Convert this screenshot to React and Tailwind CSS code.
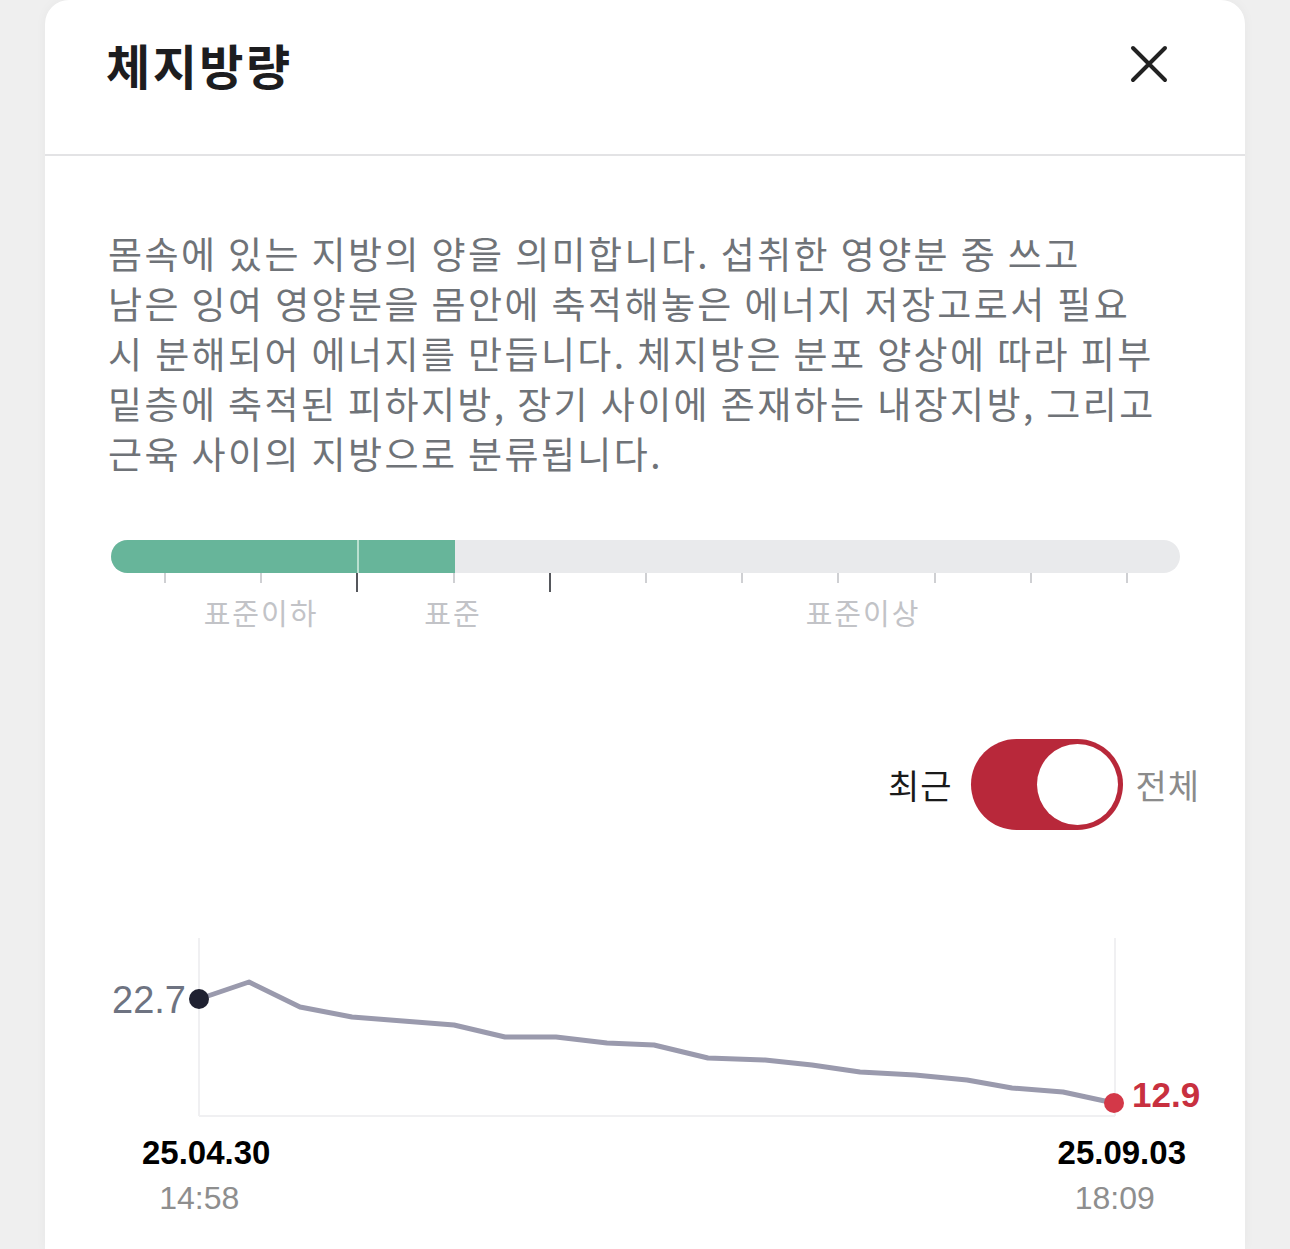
import React from "react";

const KR = { fontFamily: '"Noto Sans CJK KR", "Noto Sans", sans-serif' };

const ticks = Array.from({ length: 11 }, (_, i) => ({
  left: 53 + i * 96.2,
  major: i === 2 || i === 4,
}));

const points = [
  [199, 998], [249, 981], [300, 1006], [352, 1016], [403, 1020], [454, 1024],
  [505, 1036], [556, 1036], [607, 1042], [654, 1044], [708, 1057], [765, 1059],
  [812, 1064], [860, 1071], [915, 1074], [967, 1079], [1012, 1087], [1063, 1091],
  [1114, 1102],
];

const LevelBar = () => (
  <div className="ml-[66px] w-[1069px]">
    <div className="relative h-[33px] rounded-full bg-[#e9eaec] overflow-hidden">
      <div className="absolute left-0 top-0 h-full w-[344px] bg-[#67b59a]" />
      <div className="absolute left-[246px] top-0 h-full w-[2px] bg-[#b9e0d0]" />
    </div>
    <div className="relative h-[60px]">
      {ticks.map((t, i) => (
        <div
          key={i}
          className={t.major ? "absolute top-0 w-[2px] h-[19px] bg-[#55575c]" : "absolute top-0 w-[2px] h-[10px] bg-[#cfd0d3]"}
          style={{ left: t.left }}
        />
      ))}
      <span className="absolute top-[21px] left-[150px] -translate-x-1/2 text-[29px] leading-[36px] tracking-[2px] text-[#c2c3c7]" style={KR}>표준이하</span>
      <span className="absolute top-[21px] left-[342px] -translate-x-1/2 text-[29px] leading-[36px] tracking-[2px] text-[#c2c3c7]" style={KR}>표준</span>
      <span className="absolute top-[21px] left-[752px] -translate-x-1/2 text-[29px] leading-[36px] tracking-[2px] text-[#c2c3c7]" style={KR}>표준이상</span>
    </div>
  </div>
);

const Chart = () => (
  <svg viewBox="45 925 1200 200" width="1200" height="200" className="block">
    <line x1="199" y1="937" x2="199" y2="1115" stroke="#f0f0f2" strokeWidth="2" />
    <line x1="1115" y1="937" x2="1115" y2="1115" stroke="#f0f0f2" strokeWidth="2" />
    <line x1="199" y1="1115" x2="1115" y2="1115" stroke="#f0f0f2" strokeWidth="2" />
    <polyline
      points={points.map((p) => p.join(",")).join(" ")}
      fill="none"
      stroke="#9a9aad"
      strokeWidth="5"
      strokeLinejoin="round"
      strokeLinecap="round"
    />
    <circle cx="199" cy="998" r="10" fill="#1f2131" />
    <circle cx="1114" cy="1102" r="10" fill="#d33848" />
    <text x="186" y="1012" textAnchor="end" fontFamily="Liberation Sans, Arial, sans-serif" fontSize="38" fill="#6e7381">22.7</text>
    <text x="1132" y="1106" fontFamily="Liberation Sans, Arial, sans-serif" fontSize="35" fontWeight="700" fill="#c8303f">12.9</text>
  </svg>
);

export default function App() {
  return (
    <div className="min-h-[1249px] bg-[#efefef] px-[45px]">
      <div className="bg-white rounded-t-[24px] min-h-[1249px] shadow-[0_0_12px_rgba(0,0,0,0.04)]">
        <div className="h-[156px] border-b-2 border-[#e3e3e5] flex items-start justify-between pl-[61px] pr-[76px] pt-[32px]">
          <h1 className="text-[48px] leading-[64px] font-bold tracking-[2.5px] text-[#1d1d1f]" style={KR}>체지방량</h1>
          <button className="mt-[12px]">
            <svg width="40" height="40" viewBox="0 0 40 40">
              <path d="M4 4 L36 36 M36 4 L4 36" stroke="#222" strokeWidth="4" strokeLinecap="round" />
            </svg>
          </button>
        </div>

        <div className="pt-[72px] px-[63px]">
          <p className="text-[37px] leading-[50px] text-[#6f7378] tracking-[2.4px]" style={KR}>
            몸속에 있는 지방의 양을 의미합니다. 섭취한 영양분 중 쓰고<br />
            남은 잉여 영양분을 몸안에 축적해놓은 에너지 저장고로서 필요<br />
            시 분해되어 에너지를 만듭니다. 체지방은 분포 양상에 따라 피부<br />
            밑층에 축적된 피하지방, 장기 사이에 존재하는 내장지방, 그리고<br />
            근육 사이의 지방으로 분류됩니다.
          </p>
        </div>

        <div className="mt-[62px]">
          <LevelBar />
        </div>

        <div className="mt-[106px] flex items-center justify-end gap-[20px] pr-[45px]">
          <span className="text-[34px] tracking-[1px] text-[#1a1a1a] -mr-[1px]" style={KR}>최근</span>
          <div className="relative w-[152px] h-[91px] rounded-full bg-[#b8283a]">
            <div className="absolute right-[5px] top-[5px] w-[81px] h-[81px] rounded-full bg-white" />
          </div>
          <span className="text-[34px] tracking-[1px] text-[#8b8b8b] -ml-[8px]" style={KR}>전체</span>
        </div>

        <div className="mt-[96px]">
          <Chart />
        </div>

        <div className="mt-[7px] flex justify-between pl-[97px] pr-[59px]" style={{ fontFamily: '"Liberation Sans", Arial, sans-serif' }}>
          <div className="flex flex-col items-center">
            <span className="text-[33px] leading-[40px] font-bold text-black">25.04.30</span>
            <span className="text-[32px] leading-[50px] text-[#8e8e8e] -ml-[14px]">14:58</span>
          </div>
          <div className="flex flex-col items-center">
            <span className="text-[33px] leading-[40px] font-bold text-black">25.09.03</span>
            <span className="text-[32px] leading-[50px] text-[#8e8e8e] -ml-[14px]">18:09</span>
          </div>
        </div>
      </div>
    </div>
  );
}
